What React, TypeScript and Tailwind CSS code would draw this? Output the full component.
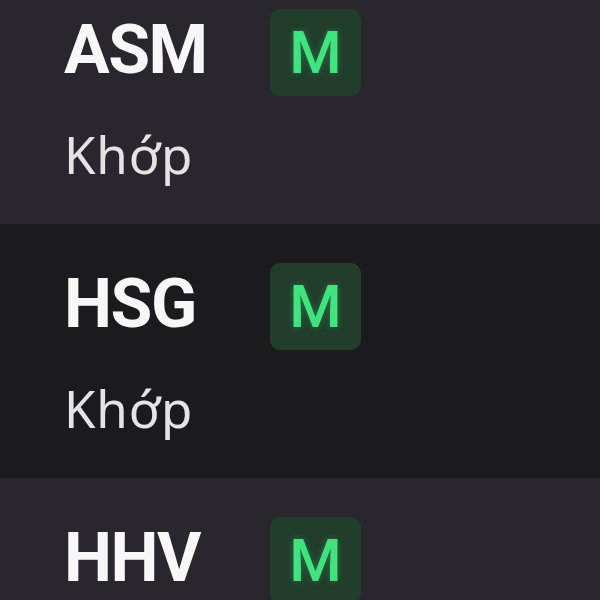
import React from "react";

const ROWS = [
  { code: "ASM", status: "Khớp", board: "M" },
  { code: "HSG", status: "Khớp", board: "M" },
  { code: "HHV", status: "Khớp", board: "M" },
];

// Order list rows, scrolled slightly so the first row is cut at the top.
export default function App() {
  return (
    <div
      className="h-[600px] w-[600px] overflow-hidden bg-[#1b1a1f]"
      style={{ fontFamily: '"Noto Sans", "Open Sans", sans-serif' }}
    >
      <div className="-mt-[30px]">
        {ROWS.map((r, i) => (
          <div
            key={r.code}
            className={`h-[254px] pl-[64px] pt-[39px] ${
              i % 2 === 0 ? "bg-[#29272d]" : "bg-[#1b1a1f]"
            }`}
          >
            <div className="flex items-start">
              <div className="mt-[7px] w-[206px] font-[Roboto,sans-serif] text-[68px] font-bold leading-none tracking-[-1.5px] text-[#f7f7f7]">
                {r.code}
              </div>
              <div className="flex h-[87px] w-[91px] items-center justify-center rounded-[10px] bg-[#213d2b] font-[Roboto,sans-serif] text-[60px] font-medium leading-none text-[#40e47e] [text-shadow:0_0_6px_rgba(64,228,126,0.35)]">
                {r.board}
              </div>
            </div>
            <div className="mt-[33px] text-[51px] leading-none tracking-[0.8px] text-[#e4e4e6]">
              {r.status}
            </div>
          </div>
        ))}
      </div>
    </div>
  );
}
